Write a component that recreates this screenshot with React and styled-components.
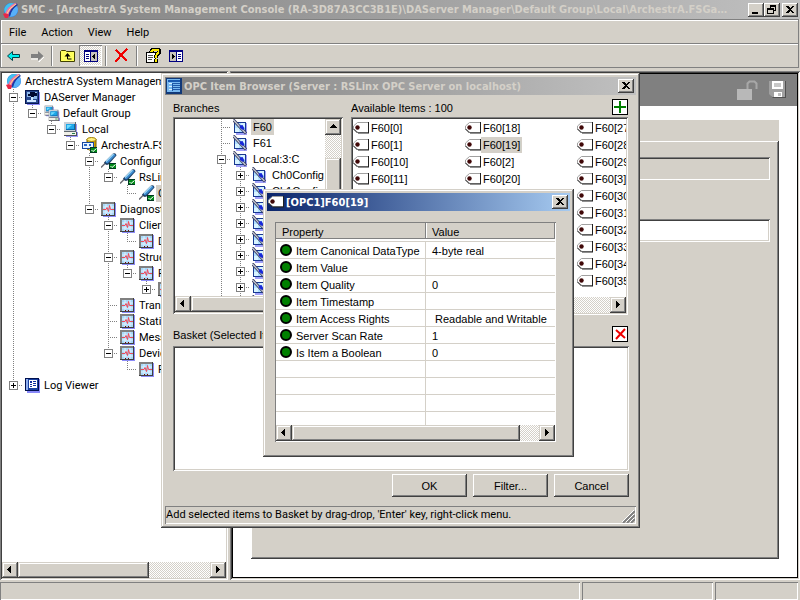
import React, { useState } from 'react';
import styled, { createGlobalStyle, css } from 'styled-components';

/* ---------- data ---------- */

const consoleTree = {
  label: 'ArchestrA System Management Console', icon: 'globe', children: [
    { label: 'DAServer Manager', icon: 'manager', open: true, children: [
      { label: 'Default Group', icon: 'group', open: true, children: [
        { label: 'Local', icon: 'computer', open: true, children: [
          { label: 'ArchestrA.FSGateway.1', icon: 'server', open: true, children: [
            { label: 'Configuration', icon: 'config', open: true, children: [
              { label: 'RsLinx', icon: 'config', open: true, children: [
                { label: 'OPC1', icon: 'config', selected: true },
              ] },
            ] },
            { label: 'Diagnostics', icon: 'pulse', open: true, children: [
              { label: 'Client Groups', icon: 'pulse', open: true, children: [
                { label: 'Default', icon: 'pulse' },
              ] },
              { label: 'Structure', icon: 'pulse', open: true, children: [
                { label: 'RsLinx', icon: 'pulse', open: true, children: [
                  { label: 'OPC1', icon: 'pulse', open: false, children: [] },
                ] },
              ] },
              { label: 'Transactions', icon: 'pulse' },
              { label: 'Statistics', icon: 'pulse' },
              { label: 'Messages', icon: 'pulse' },
              { label: 'Device Groups', icon: 'pulse', open: true, children: [
                { label: 'RsLinx', icon: 'pulse' },
              ] },
            ] },
          ] },
        ] },
      ] },
    ] },
    { label: 'Log Viewer', icon: 'log', open: false, children: [] },
  ],
};

const branches = [
  { label: 'F60', icon: 'branch', selected: true },
  { label: 'F61', icon: 'branch' },
  { label: 'Local:3:C', icon: 'branch', open: true,
    children: Array.from({ length: 9 }, (_, i) => ({ label: `Ch${i}Config`, icon: 'branch', open: false, children: [] })) },
  { label: 'Local:3:I', icon: 'branch' },
];

const items = Array.from({ length: 100 }, (_, i) => String(i)).sort().slice(0, 30).map((n) => `F60[${n}]`);

const properties = [
  ['Item Canonical DataType', '4-byte real'],
  ['Item Value', ''],
  ['Item Quality', '0'],
  ['Item Timestamp', ''],
  ['Item Access Rights', ' Readable and Writable'],
  ['Server Scan Rate', '1'],
  ['Is Item a Boolean', '0'],
  ['', ''], ['', ''], ['', ''], ['', ''],
];

// one row per node, "guides" says which ancestors still have siblings below
const flatten = (nodes, guides = []) =>
  nodes.flatMap((node, i) => {
    const last = i === nodes.length - 1;
    return [
      { ...node, guides, last },
      ...flatten(node.children || [], [...guides, !last]),
    ];
  });

/* ---------- icons ---------- */

const Svg = styled.svg`
  flex: none;
  display: block;
`;

const Check = () => (
  <>
    <path d="M8 10h7v6H8z" fill="#003820" />
    <path d="M9 11h6v4H9z" fill="#008818" />
    <path d="M9.500 13l1.500 1.500L14.500 11.500" stroke="#fff" fill="none" />
  </>
);

const Monitor = ({ x = 0, y = 0, s = 1 }) => (
  <g transform={`translate(${x} ${y}) scale(${s})`}>
    <path d="M3 3h11v8h1v5H3z" fill="#9898f8" />
    <path d="M1 1h12v10H1z" fill="#606870" />
    <path d="M1 1h11v9H1z" fill="#c8d0d8" />
    <path d="M3 3h9v6H3z" fill="#0868b0" />
    <path d="M3 3h8v5H3z" fill="#20a8e8" />
    <path d="M4 4h5L4 8z" fill="#70dcff" />
    <path d="M1 11h13v4H1z" fill="#505058" />
    <path d="M1 11h12v3H1z" fill="#f0f0e8" />
    <path d="M9 12h3v1H9z" fill="#208048" />
  </g>
);

const glyphs = {
  globe: (
    <>
      <circle cx="8" cy="8" r="7" fill="#2878d8" />
      <path d="M2 5Q6-1 12 2L3 12Q0 9 2 5z" fill="#40c0f0" />
      <path d="M7 15Q8 7 14 4l1 3q0 7-8 8z" fill="#58b0f8" />
      <path d="M3 13Q6 5 13 1l2 2Q9 6 7 14z" fill="#2038a0" />
      <path d="M2 12Q4 5 12 1l2 1Q7 6 5 14z" fill="#f070a8" />
      <path d="M3 13Q6 6 13 2" stroke="#ffe080" fill="none" />
      <path d="M0 12q3-2 6 1l-1 3H2z" fill="#e82848" />
    </>
  ),
  manager: (
    <>
      <path d="M2 3h13v13H2z" fill="#8888f8" />
      <path d="M0 1h14v14H0z" fill="#081850" />
      <path d="M1 2h12v12H1z" fill="#284890" />
      <path d="M2 3h10v5H2z" fill="#90b8e8" />
      <path d="M5 3h5v1h2v3H9v1H6V7H3V5h2z" fill="#000830" />
      <path d="M6 8h2v3h3v2H2v-2h4z" fill="#d0e8ff" />
      <path d="M8 8h4v2H8z" fill="#90b8e8" />
    </>
  ),
  group: <><Monitor x={0} y={0} s={0.7} /><Monitor x={4} y={4} s={0.8} /></>,
  computer: <Monitor />,
  server: (
    <>
      <path d="M5 2v10q4 3 9 0V2" fill="#d0a000" stroke="#705800" />
      <path d="M6 2v10q2 1 3 1V2z" fill="#ffe860" />
      <ellipse cx="9.500" cy="2.500" rx="4.500" ry="2" fill="#fff080" stroke="#a08000" />
      <path d="M0 5h12v7H0z" fill="#1848a0" />
      <path d="M1 6h10v5H1z" fill="#e8f4ff" />
      <path d="M2 7h3v2H2zM7 7h2v2H7z" fill="#2868c8" />
      <Check />
    </>
  ),
  config: (
    <>
      <path d="M0 14.500l6-6" stroke="#686870" strokeWidth="1.500" />
      <path d="M3 9.500L12 .5q3-1 3.500 2L7.500 11.500q-3 1.500-4.500-2z" fill="#204068" />
      <path d="M4.500 9l8-8q2-.5 2 1.500L7 10q-1.500 1-2.500-1z" fill="#3c8cd0" />
      <path d="M5 8.500L12.500 1" stroke="#a8dcf8" strokeWidth="1.200" />
      <Check />
    </>
  ),
  pulse: (
    <>
      <rect x="2" y="2" width="13" height="14" fill="#8c8cf8" />
      <rect x="0" y="1" width="14" height="14" fill="#404040" />
      <rect x="0" y="1" width="13" height="13" fill="#808080" />
      <rect x="2" y="3" width="11" height="11" fill="#a8d8f8" />
      <path d="M2 6h11M2 11h11M5 3v11M10 3v11" stroke="#dff2ff" />
      <path d="M2 8.500h3l1-2 1.500 4 1-6 1 4h3.500" stroke="#f04858" fill="none" />
      <path d="M5 13.500h1M8 13.500h1" stroke="#800000" />
    </>
  ),
  log: (
    <>
      <rect x="2" y="2" width="13" height="14" fill="#8888f8" />
      <path d="M0 1h14v13H0z" fill="#001050" />
      <path d="M1 2h12v11H1z" fill="#1840a0" />
      <path d="M1 2h2v11H1z" fill="#90b0f0" />
      <path d="M4 3h8v8H4z" fill="#fff" />
      <path d="M5 4h2v2H5zM5 7h2v1H5zM5 9h2v1H5zM8 4h3v1H8zM8 6h3v1H8zM8 8h3v1H8z" fill="#1030a0" />
    </>
  ),
  branch: (
    <>
      <path d="M3 4h11v12H3z" fill="#a0a0f8" />
      <path d="M1 3h12v11H1z" fill="#183890" />
      <path d="M2 4h10v9H2z" fill="#b0e0ff" />
      <path d="M2 9h4v4H2zM8 4h4v4H8z" fill="#d8f4ff" />
      <path d="M0 0.500L13 14.500" stroke="#383c60" strokeWidth="3" />
      <path d="M0 0.500L12.500 14" stroke="#c8ccd8" strokeWidth="1.200" />
      <path d="M6.500 6.500l3-.5 2 3.500-1.500 1.500-3-2z" fill="#1828d8" />
    </>
  ),
  tag: (
    <>
      <path d="M4.500 2.500h11v10H5L.500 9V6z" fill="#fff" stroke="#a0a0a0" />
      <path d="M15.500 2v11M5 13h11M.500 9l4 4" stroke="#202020" fill="none" />
      <circle cx="4.500" cy="7.500" r="2.200" fill="#400808" />
    </>
  ),
  browser: (
    <>
      <rect x="0" y="0" width="16" height="16" fill="#103878" />
      <rect x="1" y="1" width="13" height="13" fill="#78b8f0" />
      <rect x="2" y="2" width="12" height="2" fill="#1858b0" />
      <path d="M3 5.500h3M3 8.500h3M3 11.500h3" stroke="#d8f0ff" />
      <path d="M7 5.500h7M7 7.500h7M7 9.500h7M7 11.500h7M6.500 5v8" stroke="#2058a8" />
    </>
  ),
  back: <path d="M1.500 8l5-4.500v3h7v3h-7v3z" fill="#00f0f0" stroke="#004048" />,
  forward: (
    <>
      <path d="M15 9l-5 5v-3H2" stroke="#fff" fill="none" />
      <path d="M14.500 8L9 3v3H2v4h7v3z" fill="#808080" />
    </>
  ),
  up: (
    <>
      <path d="M.5 13.500v-10l1-1h4l1 1h8v10z" fill="#ffff60" stroke="#404000" />
      <path d="M7.500 6v5h4" stroke="#000" fill="none" />
      <path d="M4.500 8.500h6l-3-3.500z" fill="#000" />
    </>
  ),
  panelTree: (
    <>
      <path d="M1 2h14v12H1z" fill="#000080" />
      <path d="M2 4h5v9H2z" fill="#fff" />
      <path d="M8 4h6v9H8z" fill="#c8c4bc" />
      <path d="M3 6h3v1H3zM3 8h3v1H3zM3 10h3v1H3z" fill="#000080" />
      <path d="M12 5.500v6L9 8.500z" fill="#000" />
    </>
  ),
  panelAction: (
    <>
      <path d="M1 2h14v12H1z" fill="#000080" />
      <path d="M2 4h6v9H2z" fill="#c8c4bc" />
      <path d="M9 4h5v9H9z" fill="#fff" />
      <path d="M10 6h3v1h-3zM10 8h3v1h-3zM10 10h3v1h-3z" fill="#000080" />
      <path d="M4 5.500v6l3-3z" fill="#000" />
    </>
  ),
  remove: <path d="M2 2l5 5 6-6M7 7l6 6M7 7l-5.500 7" stroke="#f00000" strokeWidth="2" fill="none" />,
  help: (
    <>
      <path d="M1.500 4.500h9v10h-9z" fill="#fff" stroke="#000" />
      <path d="M3 7.500h5M3 9.500h5M3 11.500h4" stroke="#505050" />
      <path d="M6 4.500q1-3.500 4.500-3.500 4 0 3.500 3.500L11 8v2" stroke="#000" strokeWidth="4" fill="none" />
      <path d="M6 4q1-2.500 4.500-2.500 3.500 0 3 3L11 7.500v2" stroke="#f8e800" strokeWidth="2" fill="none" />
      <rect x="9" y="11" width="4" height="4" fill="#000" />
      <rect x="10" y="11" width="2" height="3" fill="#f8e800" />
    </>
  ),
  close: <path d="M4 3h2l2 2 2-2h2L9 6.500 12 10h-2L8 8l-2 2H4l3-3.500z" fill="#000" />,
  minimize: <path d="M4 9h6v2H4z" fill="#000" />,
  restore: <path d="M6 2h6v6h-2v3H3V5h3zM7 4v1h3v2h1V4zM4 7v3h5V7z" fill="#000" fillRule="evenodd" />,
  left: <path d="M9 4v7L5 7.500z" fill="#000" />,
  right: <path d="M6 4v7l4-3.500z" fill="#000" />,
  arrowUp: <path d="M4 9h8L8 5z" fill="#000" />,
  plus: <path d="M6 1h2v5h5v2H8v5H6V8H1V6h5z" fill="#008000" />,
  cross: <path d="M3 3l9 8M12 2L3 12" stroke="#f00000" strokeWidth="2" />,
  dot: <circle cx="7" cy="7" r="5" fill="#008000" stroke="#000" strokeWidth="2" />,
};

const Icon = ({ name, size = 16, box = 16, crisp }) => (
  <Svg width={size} height={size} viewBox={`0 0 ${box} ${box}`} fill="none" aria-hidden="true"
    shapeRendering={crisp ? 'crispEdges' : undefined}>
    {glyphs[name]}
  </Svg>
);

/* ---------- base styles ---------- */

const GlobalStyle = createGlobalStyle`
  * { box-sizing: border-box; }
  body {
    margin: 0;
    overflow: hidden;
    background: #d4d0c8;
    color: #000;
    font: 11px/16px Roboto, "Liberation Sans", sans-serif;
    cursor: default;
  }
  button, input { font: inherit; color: inherit; }
`;

const raised = css`
  background: #d4d0c8;
  box-shadow: inset -1px -1px #404040, inset 1px 1px #d4d0c8, inset -2px -2px #808080, inset 2px 2px #fff;
`;

const sunken = css`
  box-shadow: inset 1px 1px #808080, inset -1px -1px #fff, inset 2px 2px #404040, inset -2px -2px #d4d0c8;
`;

const dither = css`
  background: repeating-conic-gradient(#fff 0 25%, #d4d0c8 0 50%) 0 0 / 2px 2px;
`;

const Screen = styled.div`
  position: relative;
  display: flex;
  flex-direction: column;
  height: 100vh;
`;

/* ---------- title bars ---------- */

const TitleBar = styled.header`
  display: flex;
  align-items: center;
  gap: 2px;
  height: ${(p) => (p.$main ? 19 : 18)}px;
  padding: 0 2px 0 ${(p) => (p.$main ? 3 : 1)}px;
  flex: none;
  color: ${(p) => (p.$active ? '#fff' : '#d4d0c8')};
  background: linear-gradient(to right, ${(p) => (p.$active ? '#0a246a, #a6caf0' : '#808080, #c0c0c0')});
`;

const Title = styled.h1`
  flex: 1;
  min-width: 0;
  margin: 0;
  padding: 1px 18px 0 0;
  overflow: hidden;
  text-overflow: ellipsis;
  white-space: nowrap;
  font: bold 11px/16px "DejaVu Sans Condensed", "Liberation Sans", sans-serif;
`;

const CaptionButtons = styled.div`
  display: flex;
  flex: none;
`;

const CaptionButton = styled.button`
  width: 16px;
  height: 14px;
  padding: 0;
  border: 0;
  overflow: hidden;
  background: #d4d0c8;
  box-shadow: inset -1px -1px #404040, inset 1px 1px #fff, inset -2px -2px #808080;

  & + &:last-child {
    margin-left: 2px;
  }
`;

/* ---------- menu and toolbar ---------- */

const Band = styled.div`
  display: flex;
  flex: none;
  height: 24px;
  margin-right: 1px;
  border: 1px solid #808080;
  border-bottom: 0;
  box-shadow: inset 1px 1px #fff;
`;

const MenuBar = styled(Band).attrs({ as: 'nav' })`
  align-items: center;
  padding: 2px 1px 0;
`;

const MenuItem = styled.button`
  padding: 0 8px 0 7px;
  border: 0;
  background: none;
`;

const ToolBar = styled(Band)`
  height: 25px;
  padding: 1px 1px 0;
  border-bottom: 1px solid #808080;
`;

const ToolButton = styled.button`
  display: grid;
  place-items: center;
  width: 23px;
  height: 21px;
  padding: 0;
  border: 0;
  background: none;
  ${(p) => p.$pressed && css`
    ${dither}
    box-shadow: inset 1px 1px #808080, inset -1px -1px #fff;
  `}
`;

const ToolDivider = styled.span`
  width: 2px;
  margin: 1px 3px;
  background: linear-gradient(to right, #808080 50%, #fff 50%);
`;

/* ---------- scrollbars ---------- */

const Track = styled.div`
  display: flex;
  flex: none;
  flex-direction: ${(p) => (p.$vertical ? 'column' : 'row')};
  ${(p) => (p.$vertical ? 'width: 16px;' : 'height: 16px;')}
  ${dither}
`;

const ScrollButton = styled.button`
  flex: none;
  width: 16px;
  height: 16px;
  padding: 0;
  border: 0;
  ${raised}
`;

const Thumb = styled.div`
  ${(p) => p.$vertical && 'margin-top: 23px;'}
  flex: 0 1 ${(p) => p.$length};
  ${raised}
`;

const Spacer = styled.div`
  flex: 1;
`;

const ScrollBar = ({ length, vertical }) => (
  <Track $vertical={vertical}>
    <ScrollButton aria-label={vertical ? 'Scroll up' : 'Scroll left'}><Icon name={vertical ? 'arrowUp' : 'left'} crisp /></ScrollButton>
    <Thumb $length={length} $vertical={vertical} />
    {!vertical && <Spacer />}
    {!vertical && <ScrollButton aria-label="Scroll right"><Icon name="right" crisp /></ScrollButton>}
  </Track>
);

/* ---------- tree ---------- */

const TreeList = styled.ul`
  flex: 1;
  min-width: 0;
  min-height: 0;
  margin: 0;
  padding: 0 0 0 ${(p) => p.$inset}px;
  overflow: hidden;
  list-style: none;
`;

const TreeRow = styled.li`
  display: flex;
  align-items: center;
  height: 16px;
  white-space: nowrap;
`;

const dotsDown = 'repeating-linear-gradient(to bottom, #808080 0 1px, transparent 1px 2px)';
const dotsAcross = 'repeating-linear-gradient(to right, #808080 0 1px, transparent 1px 2px)';

const Guide = styled.span`
  display: flex;
  flex: none;
  align-items: center;
  width: 19px;
  height: 16px;
  padding-left: 5px;
  background-repeat: no-repeat;
  ${(p) => p.$kind === 'line' && css`
    background-image: ${dotsDown};
    background-position: 9px 0;
    background-size: 1px 16px;
  `}
  ${(p) => (p.$kind === 'tee' || p.$kind === 'end') && css`
    background-image: ${dotsDown}, ${dotsAcross};
    background-position: 9px 0, 9px 8px;
    background-size: 1px ${p.$kind === 'end' ? 9 : 16}px, 10px 1px;
  `}
`;

const Expander = styled.button`
  width: 9px;
  height: 9px;
  padding: 0;
  border: 1px solid #808080;
  background:
    linear-gradient(#000, #000) center / 5px 1px no-repeat,
    linear-gradient(#000, #000) center / 1px ${(p) => (p.$open ? 0 : 5)}px no-repeat,
    #fff;
`;

const TreeIcon = styled.span`
  flex: none;
  margin-left: 2px;
`;

const TreeLabel = styled.span`
  padding: ${(p) => (p.$roomy ? 0 : 1)}px 2px 0;
  margin-left: ${(p) => (p.$roomy ? 2 : 1)}px;
  background: ${(p) => (p.$selected ? '#d4d0c8' : 'none')};
`;

const Tree = ({ rows, inset, root, roomy }) => (
  <TreeList $inset={inset}>
    {root && (
      <TreeRow>
        <TreeIcon><Icon name={root.icon} /></TreeIcon>
        <TreeLabel>{root.label}</TreeLabel>
      </TreeRow>
    )}
    {rows.map((row, i) => (
      <TreeRow key={i}>
        {row.guides.map((more, g) => <Guide key={g} $kind={more ? 'line' : 'blank'} />)}
        <Guide $kind={row.last ? 'end' : 'tee'}>
          {row.children && <Expander $open={row.open} aria-label={row.open ? 'Collapse' : 'Expand'} />}
        </Guide>
        <TreeIcon><Icon name={row.icon} /></TreeIcon>
        <TreeLabel $selected={row.selected} $roomy={roomy}>{row.label}</TreeLabel>
      </TreeRow>
    ))}
  </TreeList>
);

/* ---------- main panes ---------- */

const Panes = styled.main`
  display: flex;
  flex: 1;
  gap: 2px;
  min-height: 0;
  margin-top: 3px;
`;

const TreePane = styled.section`
  display: flex;
  flex-direction: column;
  flex: none;
  width: 228px;
  padding: 2px;
  background: #fff;
  ${sunken}
`;

const DetailPane = styled.section`
  flex: 1;
  min-width: 0;
  padding: 2px;
  background: #fff;
  ${sunken}
`;

const DetailFrame = styled.div`
  display: flex;
  flex-direction: column;
  height: 100%;
  border: 1px solid #000;
`;

const DetailHeader = styled.div`
  display: flex;
  flex: none;
  justify-content: flex-end;
  align-items: center;
  gap: 10px;
  height: 32px;
  padding-right: 9px;
  background: #808080;
`;

const DetailBody = styled.div`
  display: flex;
  flex: 1;
  flex-direction: column;
  padding: 14px 18px 18px;
`;

const TabStrip = styled.div`
  height: 21px;
  background: #d4d0c8;
`;

const Panel = styled.div`
  display: flex;
  flex: 1;
  flex-direction: column;
  gap: 39px;
  padding: 16px 9px;
  background: #d4d0c8;
  box-shadow: inset -1px -1px #404040, inset 1px 1px #fff, inset -2px -2px #808080;
`;

const Field = styled.input`
  width: 100%;
  height: 23px;
  padding: 3px;
  border: 0;
  background: ${(p) => (p.disabled ? '#d4d0c8' : '#fff')};
  ${sunken}
`;

const StatusBar = styled.footer`
  display: flex;
  flex: none;
  gap: 2px;
  height: 20px;
  padding: 2px 2px 0 0;
`;

const StatusCell = styled.div`
  flex: ${(p) => p.$flex || '1 1 0'};
  box-shadow: inset 1px 1px #808080, inset -1px -1px #fff;
`;

/* ---------- dialogs ---------- */

const Dialog = styled.section`
  position: absolute;
  left: ${(p) => p.$x}px;
  top: ${(p) => p.$y}px;
  width: ${(p) => p.$width}px;
  padding: 4px;
  ${raised}
`;

const BrowserBody = styled.div`
  padding: 4px 7px 0 8px;
  font-family: "Liberation Sans", Arial, sans-serif;
`;

const Columns = styled.div`
  display: grid;
  grid-template-columns: 170px minmax(0, 1fr);
  gap: 0 8px;
  padding-right: 1px;
`;

const PaneHead = styled.div`
  display: flex;
  justify-content: space-between;
  height: 18px;
  line-height: 18px;
`;

const BasketHead = styled(PaneHead)`
  height: 20px;
  margin-top: 11px;
  padding-right: 1px;
`;

const SquareButton = styled.button`
  display: grid;
  place-items: center;
  width: 16px;
  height: 16px;
  padding: 0;
  border: 1px solid #000;
  background: #fff;
`;

const Well = styled.div`
  display: flex;
  flex-direction: ${(p) => (p.$row ? 'row' : 'column')};
  height: ${(p) => p.$height}px;
  padding: 2px;
  background: #fff;
  ${sunken}
`;

const WellColumn = styled.div`
  display: flex;
  flex: 1;
  flex-direction: column;
  min-width: 0;
`;

const ItemList = styled.ul`
  display: grid;
  flex: 1;
  grid-template-rows: repeat(10, 17px);
  grid-auto-columns: 112px;
  grid-auto-flow: column;
  min-height: 0;
  margin: 0;
  padding: 0;
  overflow: hidden;
  list-style: none;
`;

const Item = styled.li`
  display: flex;
  align-items: center;
`;

const ItemLabel = styled.span`
  padding: 0 2px;
  background: ${(p) => (p.$selected ? '#d4d0c8' : 'none')};
`;

const Actions = styled.div`
  display: flex;
  justify-content: flex-end;
  gap: 6px;
  margin: 3px 0 9px;
`;

const PushButton = styled.button`
  width: 75px;
  height: 23px;
  padding: 0;
  border: 0;
  background: #d4d0c8;
  box-shadow: inset -1px -1px #404040, inset 1px 1px #fff, inset -2px -2px #808080;
`;

const Hint = styled.div`
  display: flex;
  justify-content: space-between;
  align-items: flex-end;
  height: 18px;
  padding: 1px;
  box-shadow: inset 1px 1px #808080, inset -1px -1px #fff;
`;

const PropertyBody = styled.div`
  padding: 11px 14px 11px 8px;
  font-family: "Liberation Sans", Arial, sans-serif;
`;

const PropertyFrame = styled.div`
  display: flex;
  flex-direction: column;
  height: 220px;
  padding: 1px;
  background: #fff;
  box-shadow: inset 1px 1px #808080, inset -1px -1px #fff;
`;

const PropertyScroll = styled.div`
  flex: 1;
  min-height: 0;
  overflow: hidden;
`;

const PropertyTable = styled.table`
  width: 100%;
  table-layout: fixed;
  border-collapse: separate;
  border-spacing: 0;

  th {
    height: 18px;
    padding: 2px 6px 0;
    border-bottom: 2px solid #fff;
    background: #d4d0c8;
    background-clip: padding-box;
    box-shadow: inset -1px -1px #808080, inset 1px 0 #fff;
    text-align: left;
    font-weight: normal;
    line-height: 14px;
  }
  th:first-child {
    width: 150px;
    box-shadow: inset -1px -1px #808080;
  }
  td {
    height: 17px;
    padding: 2px 0 0 6px;
    border-top: 1px solid #d4d0c8;
    white-space: pre;
    line-height: 14px;
  }
  td:first-child {
    padding: 0 0 0 3px;
    border-right: 1px solid #d4d0c8;
  }
`;

const PropertyName = styled.span`
  display: flex;
  align-items: center;
  gap: 3px;
  height: 16px;
`;

const PropertyText = styled.span`
  padding-top: 2px;
`;

const CloseButton = ({ onClick }) => (
  <CaptionButton aria-label="Close" onClick={onClick}><Icon name="close" crisp /></CaptionButton>
);

const PropertyDialog = ({ onClose }) => (
  <Dialog $x={263} $y={189} $width={311} aria-label="Item properties">
    <TitleBar $active>
      <Icon name="tag" />
      <Title as="h2">[OPC1]F60[19]</Title>
      <CloseButton onClick={onClose} />
    </TitleBar>
    <PropertyBody>
      <PropertyFrame>
        <PropertyScroll>
          <PropertyTable>
            <thead>
              <tr><th>Property</th><th>Value</th></tr>
            </thead>
            <tbody>
              {properties.map(([name, value], i) => (
                <tr key={i}>
                  <td>
                    {name && (
                      <PropertyName>
                        <Icon name="dot" size={14} box={14} />
                        <PropertyText>{name}</PropertyText>
                      </PropertyName>
                    )}
                  </td>
                  <td>{value}</td>
                </tr>
              ))}
            </tbody>
          </PropertyTable>
        </PropertyScroll>
        <ScrollBar length="228px" />
      </PropertyFrame>
    </PropertyBody>
  </Dialog>
);

const BrowserDialog = ({ selected, onSelect, onClose }) => (
  <Dialog $x={161} $y={73} $width={479} aria-label="OPC Item Browser">
    <TitleBar>
      <Icon name="browser" crisp />
      <Title as="h2">OPC Item Browser (Server : RSLinx OPC Server on localhost)</Title>
      <CloseButton onClick={onClose} />
    </TitleBar>
    <BrowserBody>
      <Columns>
        <PaneHead>Branches</PaneHead>
        <PaneHead>
          Available Items : 100
          <SquareButton aria-label="Add to basket"><Icon name="plus" size={14} box={14} crisp /></SquareButton>
        </PaneHead>
        <Well $height={197} $row>
          <WellColumn>
            <Tree rows={flatten(branches)} inset={37} roomy />
            <ScrollBar length="90px" />
          </WellColumn>
          <ScrollBar vertical length="160px" />
        </Well>
        <Well $height={198}>
          <ItemList>
            {items.map((item) => (
              <Item key={item} onClick={() => onSelect(item)}>
                <Icon name="tag" />
                <ItemLabel $selected={item === selected}>{item}</ItemLabel>
              </Item>
            ))}
          </ItemList>
          <ScrollBar length="120px" />
        </Well>
      </Columns>
      <BasketHead>
        Basket (Selected Items) : 0
        <SquareButton aria-label="Remove from basket"><Icon name="cross" size={14} box={14} /></SquareButton>
      </BasketHead>
      <Well $height={125} />
      <Actions>
        <PushButton>OK</PushButton>
        <PushButton>Filter...</PushButton>
        <PushButton onClick={onClose}>Cancel</PushButton>
      </Actions>
    </BrowserBody>
    <Hint>
      Add selected items to Basket by drag-drop, 'Enter' key, right-click menu.
      <Svg width="13" height="13" viewBox="0 0 13 13" stroke="#808080" strokeWidth="2">
        <path d="M1 13L13 1M5 13l8-8M9 13l4-4" />
        <path d="M0 12L12 0M4 12l8-8M8 12l4-4" stroke="#fff" strokeWidth="1" />
      </Svg>
    </Hint>
  </Dialog>
);

/* ---------- app ---------- */

const App = () => {
  const [selected, setSelected] = useState('F60[19]');
  const [browserOpen, setBrowserOpen] = useState(true);
  const [propsOpen, setPropsOpen] = useState(true);

  return (
    <Screen>
      <GlobalStyle />
      <TitleBar $main>
        <Icon name="globe" />
        <Title>
          SMC - [ArchestrA System Management Console (RA-3D87A3CC3B1E)\DAServer Manager\Default Group\Local\ArchestrA.FSGateway.1\Configuration]
        </Title>
        <CaptionButtons>
          <CaptionButton aria-label="Minimize"><Icon name="minimize" crisp /></CaptionButton>
          <CaptionButton aria-label="Restore"><Icon name="restore" crisp /></CaptionButton>
          <CaptionButton aria-label="Close"><Icon name="close" crisp /></CaptionButton>
        </CaptionButtons>
      </TitleBar>
      <MenuBar>
        {['File', 'Action', 'View', 'Help'].map((name) => <MenuItem key={name}>{name}</MenuItem>)}
      </MenuBar>
      <ToolBar role="toolbar">
        <ToolButton aria-label="Back"><Icon name="back" /></ToolButton>
        <ToolButton aria-label="Forward"><Icon name="forward" /></ToolButton>
        <ToolDivider />
        <ToolButton aria-label="Up one level"><Icon name="up" /></ToolButton>
        <ToolButton aria-label="Show tree" $pressed><Icon name="panelTree" crisp /></ToolButton>
        <ToolDivider />
        <ToolButton aria-label="Delete"><Icon name="remove" crisp /></ToolButton>
        <ToolDivider />
        <ToolButton aria-label="Help"><Icon name="help" crisp /></ToolButton>
        <ToolButton aria-label="Show actions"><Icon name="panelAction" crisp /></ToolButton>
      </ToolBar>

      <Panes>
        <TreePane>
          <Tree root={consoleTree} rows={flatten(consoleTree.children)} inset={2} />
          <ScrollBar length="131px" />
        </TreePane>
        <DetailPane>
          <DetailFrame>
            <DetailHeader>
              <Svg width="21" height="21" viewBox="0 0 21 21">
                <rect x="0" y="9" width="15" height="11" fill="#b8b8b8" />
                <path d="M10.500 9V3.500l2-2h5l2 2V9" stroke="#a8a8a8" strokeWidth="2" fill="none" />
              </Svg>
              <Svg width="20" height="20" viewBox="0 0 20 20">
                <path d="M2 1h16v17H5l-2-2z" fill="#505050" />
                <path d="M1 1h16v16H4l-3-3z" fill="#a0a0a0" />
                <path d="M4 1h11v8H4zM6 12h8v5H6z" fill="#fff" />
                <path d="M6 4h7M6 6h7" stroke="#909090" />
                <path d="M10 13h3v3h-3z" fill="#c0c0c0" />
              </Svg>
            </DetailHeader>
            <DetailBody>
              <TabStrip />
              <Panel>
                <Field disabled aria-label="Node name" />
                <Field aria-label="Server name" />
              </Panel>
            </DetailBody>
          </DetailFrame>
        </DetailPane>
      </Panes>

      <StatusBar>
        <StatusCell />
        <StatusCell $flex="0 0 131px" />
        <StatusCell $flex="0 0 83px" />
      </StatusBar>

      {browserOpen && (
        <BrowserDialog selected={selected} onSelect={setSelected} onClose={() => setBrowserOpen(false)} />
      )}
      {propsOpen && <PropertyDialog onClose={() => setPropsOpen(false)} />}
    </Screen>
  );
};

export default App;
